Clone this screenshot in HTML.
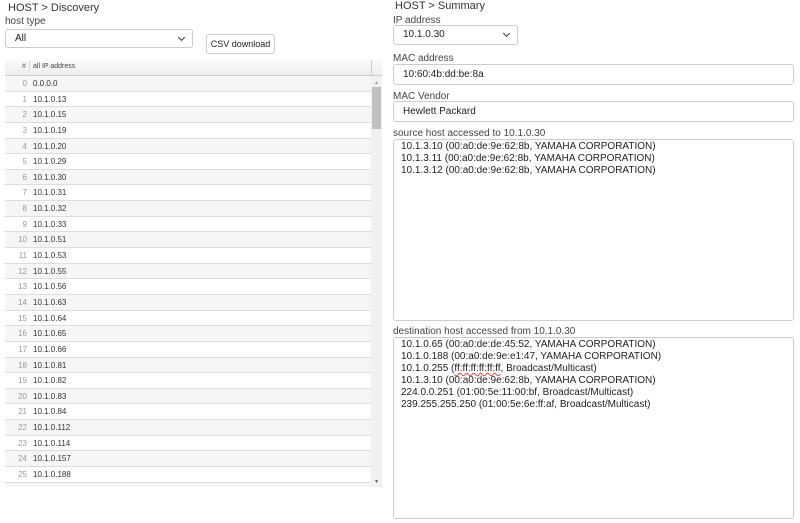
<!DOCTYPE html>
<html><head><style>
body{margin:0;width:800px;height:523px;background:#fff;font-family:"Liberation Sans",Verdana,sans-serif;color:#333;position:relative;overflow:hidden}
.a{position:absolute}
.lbl{font-size:10px;color:#444}
.box{position:absolute;border:1px solid #ccc;border-radius:3px;background:#fff;box-sizing:border-box;font-size:10px;color:#222;padding-left:9px}
.chev{position:absolute;right:8px;top:5px;width:4px;height:4px;border-right:1.5px solid #333;border-bottom:1.5px solid #333;transform:rotate(45deg)}
.row{position:absolute;left:5px;width:366px;height:15.64px;border-bottom:1px solid #ddd;box-sizing:border-box;font-size:8px;color:#333}
.row span{position:absolute;left:0;width:22px;text-align:right;color:#999}
.row b{font-weight:normal;position:absolute;left:28px;top:3px}
.ta div{line-height:12px}
</style></head><body>
<div class="a" style="left:8px;top:2px;font-size:11px;color:#333">HOST &gt; Discovery</div>
<div class="a lbl" style="left:5px;top:16px">host type</div>
<div class="box" style="left:5px;top:29px;width:188px;height:19px;line-height:17px">All<div class="chev"></div></div>
<div class="box" style="left:206px;top:34px;width:69px;height:20px;line-height:18px;font-size:9px;padding-left:0;text-align:center">CSV download</div>

<div class="a" style="left:5px;top:60px;width:377px;height:16px;background:linear-gradient(#fafafa,#eee);border-bottom:1px solid #ccc;box-sizing:border-box"></div>
<div class="a" style="left:29px;top:60px;width:1px;height:427px;background:#ddd"></div>
<div class="a" style="left:371px;top:60px;width:1px;height:16px;background:#ccc"></div>
<div class="a" style="left:22px;top:63px;font-size:7px;color:#666">#</div>
<div class="a" style="left:33px;top:63px;font-size:7px;color:#444">all IP address</div>
<div class="a" style="left:371px;top:76px;width:11px;height:411px;background:#f1f1f1"></div>
<div class="a" style="left:372px;top:87px;width:9px;height:42px;background:#c1c1c1"></div>
<div class="a" style="left:374px;top:80px;font-size:5px;color:#999">▲</div>
<div class="a" style="left:374px;top:479px;font-size:5px;color:#555">▼</div>
<div id="rows"></div>
<script>
var ips=["0.0.0.0","10.1.0.13","10.1.0.15","10.1.0.19","10.1.0.20","10.1.0.29","10.1.0.30","10.1.0.31","10.1.0.32","10.1.0.33","10.1.0.51","10.1.0.53","10.1.0.55","10.1.0.56","10.1.0.63","10.1.0.64","10.1.0.65","10.1.0.66","10.1.0.81","10.1.0.82","10.1.0.83","10.1.0.84","10.1.0.112","10.1.0.114","10.1.0.157","10.1.0.188"];
var h="";for(var i=0;i<ips.length;i++){h+='<div class="row" style="top:'+(76+i*15.64)+'px;background:'+(i%2?'#fff':'#f6f6f6')+'"><span style="top:3px">'+i+'</span><b>'+ips[i]+'</b></div>';}
h+='<div class="row" style="top:'+(76+26*15.64)+'px;height:'+(487-76-26*15.64)+'px;background:#f6f6f6;border:0"></div>';
document.getElementById("rows").innerHTML=h;
</script>

<div class="a" style="left:395px;top:0px;font-size:11px;color:#333">HOST &gt; Summary</div>
<div class="a lbl" style="left:393px;top:15px">IP address</div>
<div class="box" style="left:393px;top:25px;width:125px;height:20px;line-height:18px">10.1.0.30<div class="chev"></div></div>
<div class="a lbl" style="left:393px;top:53px">MAC address</div>
<div class="box" style="left:393px;top:64px;width:401px;height:21px;line-height:19px">10:60:4b:dd:be:8a</div>
<div class="a lbl" style="left:393px;top:91px">MAC Vendor</div>
<div class="box" style="left:393px;top:101px;width:401px;height:21px;line-height:19px">Hewlett Packard</div>
<div class="a lbl" style="left:393px;top:128px">source host accessed to 10.1.0.30</div>
<div class="box ta" style="left:393px;top:139px;width:401px;height:182px;padding-left:7px;padding-top:1px">
<div>10.1.3.10 (00:a0:de:9e:62:8b, YAMAHA CORPORATION)</div>
<div>10.1.3.11 (00:a0:de:9e:62:8b, YAMAHA CORPORATION)</div>
<div>10.1.3.12 (00:a0:de:9e:62:8b, YAMAHA CORPORATION)</div></div>
<div class="a lbl" style="left:393px;top:326px">destination host accessed from 10.1.0.30</div>
<div class="box ta" style="left:393px;top:337px;width:401px;height:182px;padding-left:7px;padding-top:1px">
<div>10.1.0.65 (00:a0:de:de:45:52, YAMAHA CORPORATION)</div>
<div>10.1.0.188 (00:a0:de:9e:e1:47, YAMAHA CORPORATION)</div>
<div>10.1.0.255 (<span style="text-decoration:underline wavy #d44">ff:ff:ff:ff:ff:ff</span>, Broadcast/Multicast)</div>
<div>10.1.3.10 (00:a0:de:9e:62:8b, YAMAHA CORPORATION)</div>
<div>224.0.0.251 (01:00:5e:11:00:bf, Broadcast/Multicast)</div>
<div>239.255.255.250 (01:00:5e:6e:ff:af, Broadcast/Multicast)</div></div>
</body></html>
